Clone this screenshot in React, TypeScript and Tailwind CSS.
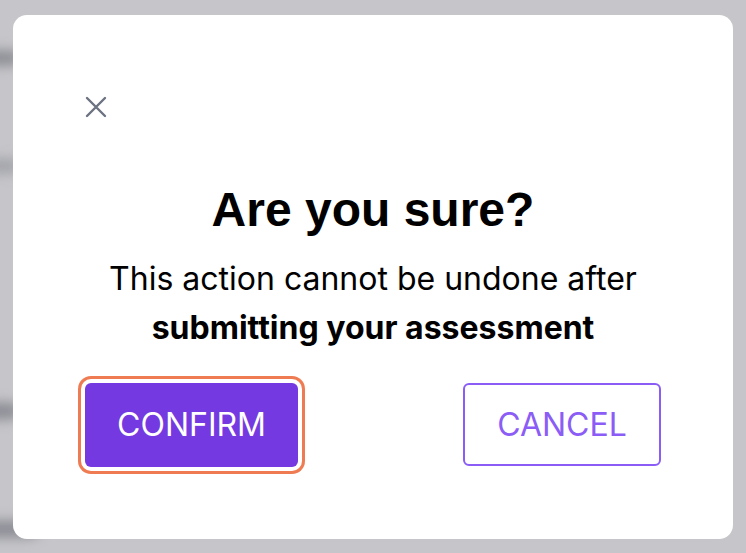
export default function App() {
  return (
    <div className="relative min-h-[553px] w-full overflow-hidden bg-[#c6c6ca] pl-[13px] pt-[15px] font-['Inter',sans-serif]">
      {/* blurred page behind the modal */}
      <div className="absolute left-[-20px] top-[50px] h-[16px] w-[40px] rounded-full bg-[#8e8f96] blur-[6px]" />
      <div className="absolute left-[-20px] top-[158px] h-[16px] w-[40px] rounded-full bg-[#a4a5ab] blur-[6px]" />
      <div className="absolute left-[-20px] top-[402px] h-[18px] w-[40px] rounded-full bg-[#8e8f96] blur-[6px]" />
      <div className="absolute left-[-20px] top-[520px] h-[18px] w-[60px] rounded-full bg-[#8e8f96] blur-[6px]" />

      <div className="relative flex h-[524px] w-[720px] flex-col rounded-[14px] bg-white px-[72px] pt-[81px]">
        <button className="flex h-[22px] w-[22px] items-center justify-center text-[#6b7280]">
          <svg width="22" height="22" viewBox="0 0 22 22" fill="none" stroke="currentColor" strokeWidth="2.4" strokeLinecap="round">
            <path d="M2 2 20 20M20 2 2 20" />
          </svg>
        </button>

        <h2 className="mt-[66px] text-center font-['Liberation_Sans',Arial,sans-serif] text-[48px] font-bold leading-[52px] text-black">
          Are you sure?
        </h2>

        <p className="mt-[18px] text-center text-[32px] leading-[49px] text-black">
          This action cannot be undone after
          <br />
          <span className="font-bold">submitting your assessment</span>
        </p>

        <div className="mt-[31px] flex items-start justify-between">
          <button className="flex h-[84px] w-[213px] items-center justify-center rounded-[6px] bg-[#7439e0] text-[32px] text-white ring-[3px] ring-[#ef7b52] ring-offset-4 ring-offset-white">
            CONFIRM
          </button>
          <button className="flex h-[83px] w-[198px] items-center justify-center rounded-[6px] border-2 border-[#8b5cf6] text-[32px] text-[#8b5cf6]">
            CANCEL
          </button>
        </div>
      </div>
    </div>
  );
}
